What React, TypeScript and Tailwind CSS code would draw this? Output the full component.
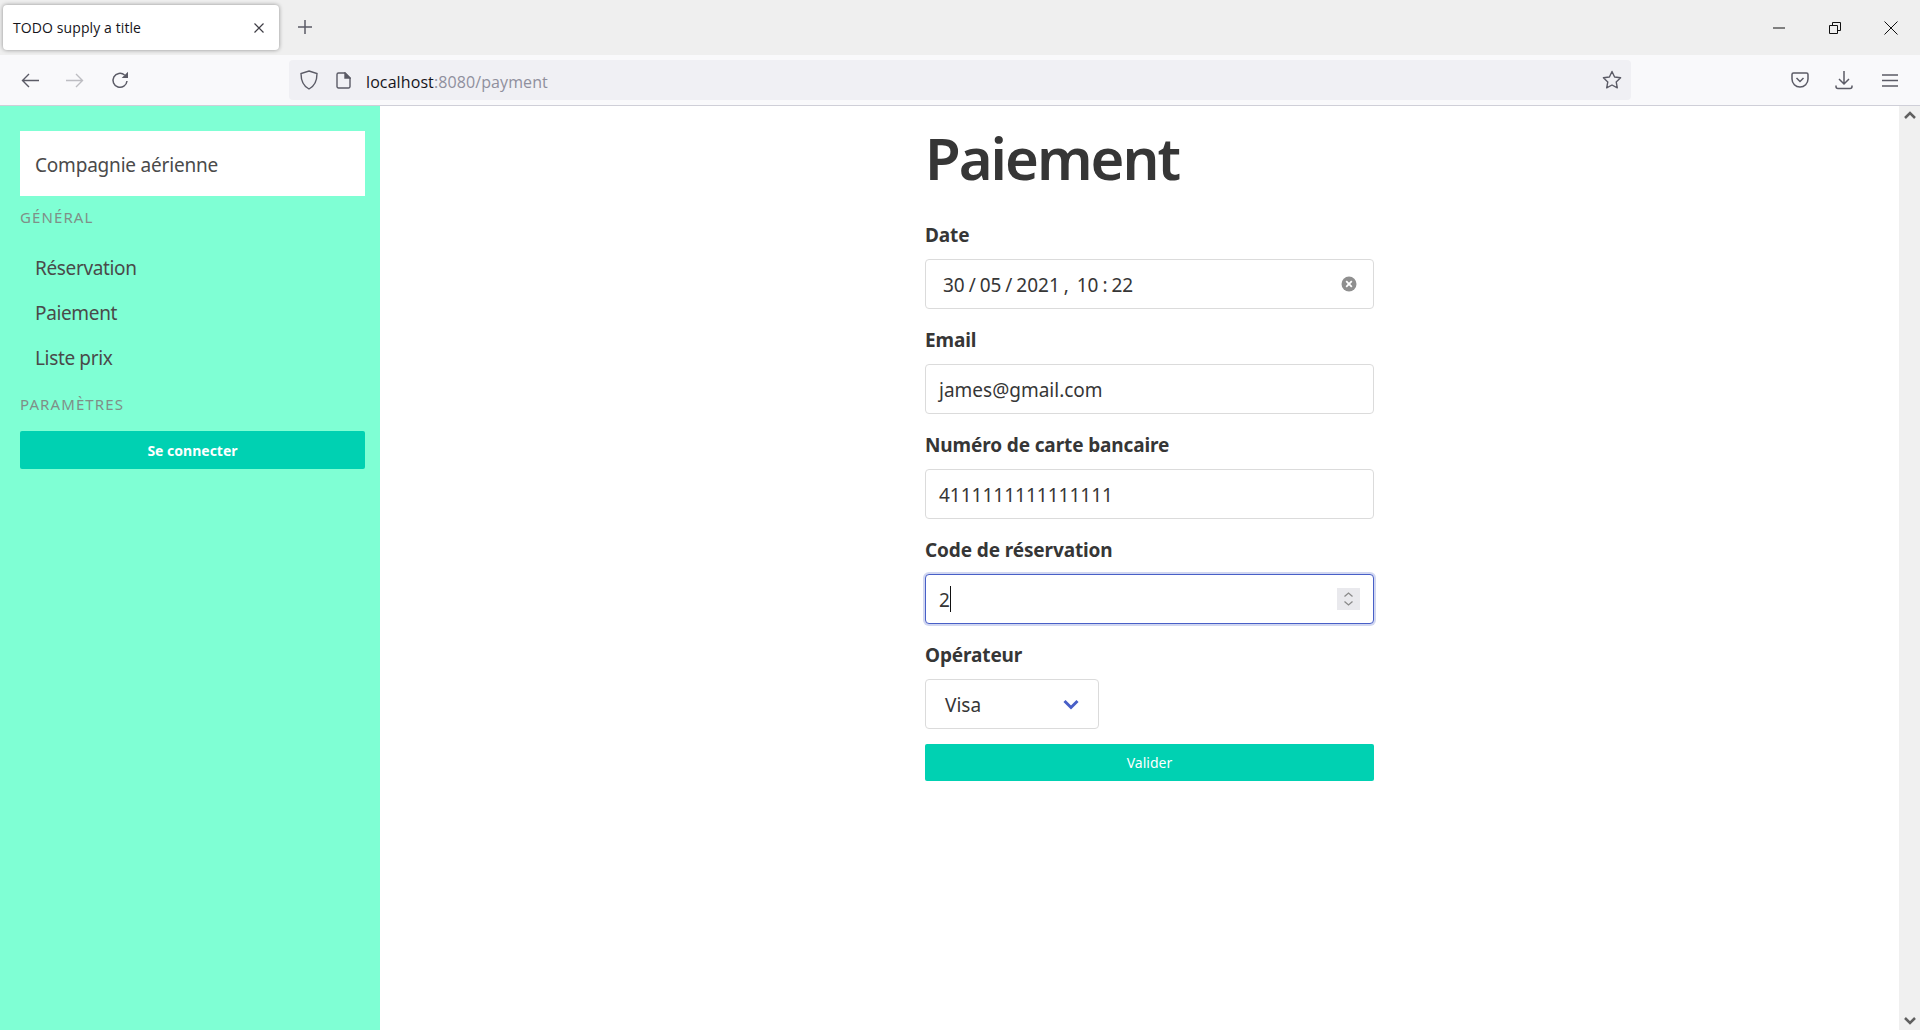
import React from "react";

function Field({ label, children }: { label: string; children: React.ReactNode }) {
  return (
    <div className="flex flex-col">
      <div className="h-[24px] mb-[12px] text-[19px] leading-[24px] font-bold tracking-[-0.12px] text-[#363636]">{label}</div>
      {children}
    </div>
  );
}

function Box({ children, className = "" }: { children: React.ReactNode; className?: string }) {
  return (
    <div className={`h-[50px] border border-[#dbdbdb] rounded-[4px] bg-white flex items-center text-[19px] text-[#363636] ${className}`}>
      {children}
    </div>
  );
}

export default function App() {
  return (
    <div className="h-[1030px] w-[1920px] overflow-hidden flex flex-col bg-white font-['Noto_Sans',sans-serif]">
      {/* Tab strip */}
      <div className="h-[55px] bg-[#efefef] flex items-start shrink-0">
        <div className="mt-[5px] ml-[3px] w-[276px] h-[45px] bg-white rounded-[4px] shadow-[0_0_4px_rgba(0,0,0,0.4)] flex items-center pl-[10px] pr-[15px]">
          <span className="text-[14px] tracking-[0.1px] text-[#15141a] font-['Open_Sans',sans-serif] flex-1">TODO supply a title</span>
          <svg width="10" height="10" viewBox="0 0 10 10" stroke="#3f3e46" strokeWidth="1.2" fill="none"><path d="M.5.5l9 9M9.500.5l-9 9" /></svg>
        </div>
        <svg width="16" height="16" viewBox="0 0 16 16" className="mt-[19px] ml-[18px]" stroke="#5b5b66" strokeWidth="1.5" fill="none"><path d="M8 1v14M1 8h14" /></svg>
        <div className="ml-auto flex items-center h-[55px] pr-[1px]">
          <div className="w-[57px] flex justify-center"><svg width="12" height="2"><path d="M0 1h12" stroke="#111" strokeWidth="1" /></svg></div>
          <div className="w-[56px] flex justify-center"><svg width="12" height="12" viewBox="0 0 12 12" fill="none" stroke="#111"><path d="M.5 3.5h8v8h-8zM3.5 3.5v-3h8v8h-3" /></svg></div>
          <div className="w-[56px] flex justify-center"><svg width="14" height="14" viewBox="0 0 14 14" fill="none" stroke="#111"><path d="M.5.5l13 13M13.5.5l-13 13" /></svg></div>
        </div>
      </div>

      {/* Toolbar */}
      <div className="h-[51px] bg-[#f9f9fb] border-b border-[#cfcfd8] flex items-center shrink-0">
        <div className="w-[289px] pl-[21px] flex items-center gap-[27px] shrink-0">
          <svg width="18" height="15" viewBox="0 0 18 15" fill="none" stroke="#5b5b66" strokeWidth="1.4"><path d="M18 7.500H1.500M8 1L1.500 7.500 8 14" /></svg>
          <svg width="18" height="15" viewBox="0 0 18 15" fill="none" stroke="#bdbdc2" strokeWidth="1.4"><path d="M0 7.500h16.500M10 1l6.500 6.500L10 14" /></svg>
          <svg width="18" height="18" viewBox="0 0 18 18" fill="none" stroke="#5b5b66" strokeWidth="1.5"><path d="M16 10a7 7 0 1 1-2.400-6" /><path d="M17 .7v6.300h-6.300z" fill="#5b5b66" stroke="none" /></svg>
        </div>
        <div className="w-[1342px] h-[40px] bg-[#f0f0f4] rounded-[4px] flex items-center pl-[11px] pr-[9px] shrink-0">
          <svg width="18" height="20" viewBox="0 0 18 20" fill="none" stroke="#5b5b66" strokeWidth="1.4"><path d="M9 1l8 2.500c0 7.500-1.700 12.300-8 15.500C2.700 15.800 1 11 1 3.500z" /></svg>
          <svg width="15" height="17" viewBox="0 0 15 17" fill="none" stroke="#5b5b66" strokeWidth="1.4" className="ml-[18px]"><path d="M2.500 1H9l5 5v8.500a1.500 1.500 0 0 1-1.500 1.500h-10A1.500 1.500 0 0 1 1 14.500v-12A1.500 1.500 0 0 1 2.500 1z" /><path d="M9 1v5h5z" fill="#5b5b66" /></svg>
          <div className="ml-[15px] pt-[3px] text-[16px] tracking-[0.1px] font-['Open_Sans',sans-serif] flex-1"><span className="text-[#15141a]">localhost</span><span className="text-[#8f8f9d]">:8080/payment</span></div>
          <svg width="20" height="20" viewBox="0 0 20 20" fill="none" stroke="#5b5b66" strokeWidth="1.4" strokeLinejoin="round"><path d="M10 1.500l2.600 5.500 6 .8-4.400 4.100 1.100 5.900L10 15l-5.300 2.800 1.100-5.900L1.400 7.800l6-.8z" /></svg>
        </div>
        <div className="flex items-center ml-[147px]">
          <div className="w-[44px] flex justify-center">
            <svg width="18" height="16" viewBox="0 0 18 16" fill="none" stroke="#5b5b66" strokeWidth="1.5"><path d="M2.500 1h13A1.500 1.500 0 0 1 17 2.500V7a8 8 0 0 1-16 0V2.500A1.500 1.500 0 0 1 2.500 1z" /><path d="M5.500 6L9 9.500 12.500 6" /></svg>
          </div>
          <div className="w-[44px] flex justify-center">
            <svg width="18" height="20" viewBox="0 0 18 20" fill="none" stroke="#5b5b66" strokeWidth="1.5"><path d="M9 1v13M4 9l5 5 5-5M1 15.500v1A2 2 0 0 0 3 18.500h12a2 2 0 0 0 2-2v-1" /></svg>
          </div>
          <div className="w-[48px] flex justify-center">
            <svg width="16" height="13" viewBox="0 0 16 13" fill="none" stroke="#5b5b66" strokeWidth="1.5"><path d="M0 1h16M0 6.500h16M0 12h16" /></svg>
          </div>
        </div>
      </div>

      {/* Page */}
      <div className="flex-1 flex min-h-0">
        <aside className="w-[380px] bg-[#7fffd4] shrink-0 pt-[25px] pl-[20px] pr-[15px]">
          <div className="h-[65px] bg-white flex items-center pl-[15px] pt-[4px] text-[19px] tracking-[-0.2px] text-[#4a4a4a]">Compagnie aérienne</div>
          <div className="mt-[11px] h-[20px] leading-[20px] text-[15px] tracking-[1.1px] text-[#7f8f88]">GÉNÉRAL</div>
          <nav className="mt-[19px] flex flex-col text-[19px] tracking-[-0.35px] text-[#4a4a4a] pl-[15px]">
            <div className="h-[45px] leading-[45px]">Réservation</div>
            <div className="h-[45px] leading-[45px]">Paiement</div>
            <div className="h-[45px] leading-[45px]">Liste prix</div>
          </nav>
          <div className="mt-[13px] h-[20px] leading-[20px] text-[15px] tracking-[1.1px] text-[#7f8f88]">PARAMÈTRES</div>
          <div className="mt-[17px] h-[38px] bg-[#00d1b2] rounded-[2px] flex items-center justify-center text-[14px] font-bold text-white">Se connecter</div>
        </aside>

        <main className="flex-1 flex justify-center">
          <div className="w-[449px] ml-[20px] flex flex-col">
            <h1 className="h-[76px] mt-[14px] leading-[76px] text-[58px] font-semibold text-[#363636] tracking-[-2px]">Paiement</h1>
            <div className="mt-[27px] flex flex-col gap-[19px]">
              <Field label="Date">
                <Box className="pl-[17px] pr-[16px]">
                  <span className="flex-1 pt-[2px] whitespace-pre [word-spacing:-1px]">30 / 05 / 2021 ,  10 : 22</span>
                  <svg width="16" height="16" viewBox="0 0 16 16"><circle cx="8" cy="8" r="7.500" fill="#8f8f8f" /><path d="M5.200 5.200l5.600 5.600M10.800 5.200l-5.600 5.600" stroke="#fff" strokeWidth="1.800" /></svg>
                </Box>
              </Field>
              <Field label="Email"><Box className="pl-[13px]"><span className="pt-[2px]">james@gmail.com</span></Box></Field>
              <Field label="Numéro de carte bancaire"><Box className="pl-[13px]"><span className="pt-[2px]">4111111111111111</span></Box></Field>
              <Field label="Code de réservation">
                <Box className="pl-[13px] pr-[13px] !border-[#485fc7] shadow-[0_0_0_2px_rgba(72,95,199,0.25)]">
                  <span className="pt-[2px]">2</span>
                  <span className="w-px h-[26px] bg-[#111]" />
                  <div className="ml-auto w-[23px] h-[22px] bg-[#e9e9ed] flex items-center justify-center">
                    <svg width="11" height="16" viewBox="0 0 11 16" fill="none" stroke="#8a8a8a" strokeWidth="1.300"><path d="M1.500 5.500L5.500 2l4 3.500M1.500 10.500l4 3.500 4-3.500" /></svg>
                  </div>
                </Box>
              </Field>
              <Field label="Opérateur">
                <Box className="w-[174px] pl-[19px] pr-[19px] justify-between">
                  <span className="pt-[2px]">Visa</span>
                  <svg width="16" height="11" viewBox="0 0 16 11" fill="none" stroke="#485fc7" strokeWidth="3"><path d="M1.500 2l6.500 6.500L14.500 2" /></svg>
                </Box>
              </Field>
            </div>
            <div className="mt-[15px] h-[37px] bg-[#00d1b2] rounded-[2px] flex items-center justify-center text-[14px] text-white">Valider</div>
          </div>
        </main>

        <div className="w-[21px] bg-[#f0f0f0] shrink-0 flex flex-col items-center justify-between py-[5px]">
          <svg width="12" height="8" viewBox="0 0 12 8" fill="none" stroke="#606060" strokeWidth="2.500"><path d="M1 7l5-5 5 5" /></svg>
          <svg width="12" height="8" viewBox="0 0 12 8" fill="none" stroke="#606060" strokeWidth="2.500"><path d="M1 1l5 5 5-5" /></svg>
        </div>
      </div>
    </div>
  );
}
